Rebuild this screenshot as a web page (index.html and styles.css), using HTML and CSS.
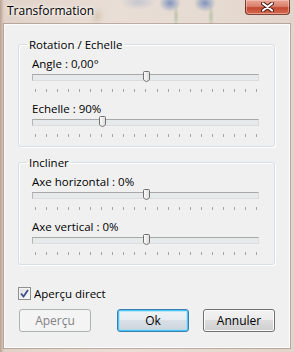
FILE: index.html
```html
<!DOCTYPE html>
<html lang="fr">
<head>
  <meta charset="UTF-8" />
  <title>Transformation</title>
  <link rel="stylesheet" href="styles.css">
</head>
<body>
  <div class="window">
    <!-- Barre de titre -->
    <div class="titlebar">
      <span class="title">Transformation</span>
      <button class="close" title="Fermer">
        <svg width="13" height="10" viewBox="0 0 13 10">
          <path d="M2 1.5 L11 8.5 M11 1.5 L2 8.5" stroke="#4a1a12" stroke-width="4" stroke-linecap="round"/>
          <path d="M2 1.5 L11 8.5 M11 1.5 L2 8.5" stroke="#fff" stroke-width="2.2" stroke-linecap="round"/>
        </svg>
      </button>
    </div>

    <div class="client">
      <fieldset class="group">
        <legend>Rotation / Echelle</legend>
        <div class="group-body">
          <div class="slider">
            <div class="slider-label">Angle : 0,00°</div>
            <div class="track"><div class="rail"><span class="thumb" style="left: 50%"></span></div></div>
            <div class="ticks"><i></i><i></i><i></i><i></i><i></i><i></i><i></i><i></i><i></i><i></i><i></i><i></i><i></i><i></i><i></i><i></i><i></i><i></i><i></i><i></i><i></i></div>
          </div>
          <div class="slider">
            <div class="slider-label">Echelle : 90%</div>
            <div class="track"><div class="rail"><span class="thumb" style="left: 30.3%"></span></div></div>
            <div class="ticks"><i></i><i></i><i></i><i></i><i></i><i></i><i></i><i></i><i></i><i></i><i></i><i></i><i></i><i></i><i></i><i></i><i></i><i></i><i></i><i></i><i></i></div>
          </div>
        </div>
      </fieldset>

      <fieldset class="group">
        <legend>Incliner</legend>
        <div class="group-body">
          <div class="slider">
            <div class="slider-label">Axe horizontal : 0%</div>
            <div class="track"><div class="rail"><span class="thumb" style="left: 50%"></span></div></div>
            <div class="ticks"><i></i><i></i><i></i><i></i><i></i><i></i><i></i><i></i><i></i><i></i><i></i><i></i><i></i><i></i><i></i><i></i><i></i><i></i><i></i><i></i><i></i></div>
          </div>
          <div class="slider">
            <div class="slider-label">Axe vertical : 0%</div>
            <div class="track"><div class="rail"><span class="thumb" style="left: 50%"></span></div></div>
            <div class="ticks"><i></i><i></i><i></i><i></i><i></i><i></i><i></i><i></i><i></i><i></i><i></i><i></i><i></i><i></i><i></i><i></i><i></i><i></i><i></i><i></i><i></i></div>
          </div>
        </div>
      </fieldset>

      <label class="check">
        <span class="box">
          <svg width="9" height="9" viewBox="0 0 9 9">
            <path d="M1 4.5 L3.5 7.5 L8 1" fill="none" stroke="#3b4f8c" stroke-width="1.8"/>
          </svg>
        </span>
        Aperçu direct
      </label>

      <div class="buttons">
        <button class="btn" disabled>Aperçu</button>
        <button class="btn btn-default">Ok</button>
        <button class="btn">Annuler</button>
      </div>
    </div>
  </div>
</body>
</html>
```

FILE: styles.css
```css
* {
  box-sizing: border-box;
}

body {
  margin: 0;
  font-family: "Segoe UI", "Open Sans", sans-serif;
  font-size: 11.5px;
  color: #000;
}

.window {
  width: 294px;
  height: 352px;
  display: flex;
  flex-direction: column;
  background:
    radial-gradient(ellipse 11px 9px at 170px 3px, rgba(60, 100, 175, 0.6), transparent),
    radial-gradient(ellipse 11px 9px at 205px 3px, rgba(60, 100, 175, 0.6), transparent),
    radial-gradient(ellipse 3px 12px at 176px 16px, rgba(110, 150, 90, 0.35), transparent),
    radial-gradient(ellipse 3px 12px at 211px 16px, rgba(110, 150, 90, 0.35), transparent),
    radial-gradient(ellipse 18px 8px at 138px 2px, rgba(90, 130, 190, 0.25), transparent),
    radial-gradient(ellipse 8px 10px at 97px 16px, rgba(180, 160, 120, 0.3), transparent),
    linear-gradient(90deg, #b9a093 0, #e0d2c8 4px, #e9ded6 40%, #e6dbd2 70%, #e1d4ca 100%);
}

.titlebar {
  height: 24px;
  display: flex;
  justify-content: space-between;
  align-items: flex-start;
}

.title {
  padding: 3px 0 0 7px;
  font-size: 12px;
  line-height: 15px;
  text-shadow: 0 0 6px #fff, 0 0 3px #fff;
}

.close {
  width: 45px;
  height: 15px;
  margin-right: 4px;
  padding: 0;
  display: flex;
  align-items: center;
  justify-content: center;
  border: 1px solid rgba(80, 30, 20, 0.7);
  border-top: none;
  border-radius: 0 0 4px 4px;
  background: linear-gradient(#e9a493 0%, #d9816e 45%, #c44a33 55%, #d2684c 100%);
  box-shadow: inset 0 0 0 1px rgba(255, 210, 200, 0.5);
}

.client {
  flex: 1;
  margin: 0 4px 4px 4px;
  padding: 12px 14px 0 13px;
  background: #f0f0f0;
  border: 1px solid rgba(255, 255, 255, 0.8);
  box-shadow: 0 0 0 1px rgba(110, 80, 70, 0.35);
}

.group {
  margin: 0 0 8px 0;
  padding: 0;
  border: 1px solid #d5dfe5;
  border-radius: 3px;
  box-shadow: inset 1px 1px 0 #fff, 1px 1px 0 #fff;
}

.group legend {
  margin-left: 8px;
  padding: 0 2px;
  line-height: 15px;
}

.group-body {
  padding: 4px 15px 9px 13px;
}

.slider + .slider {
  margin-top: 9px;
}

.slider-label {
  line-height: 15px;
}

.track {
  height: 7px;
  margin-top: 3px;
  padding: 0 2px 0 2px;
  border: 1px solid #dcdcdc;
  border-top-color: #a8a8a8;
  border-left-color: #b4b4b4;
  background: #e7eaea;
}

.rail {
  position: relative;
  height: 100%;
}

.thumb {
  position: absolute;
  top: -4px;
  width: 7px;
  height: 11px;
  margin-left: -3px;
  background: url("data:image/svg+xml,%3Csvg xmlns='http://www.w3.org/2000/svg' width='7' height='11'%3E%3Cdefs%3E%3ClinearGradient id='g' x1='0' y1='0' x2='1' y2='0'%3E%3Cstop offset='0' stop-color='%23fdfdfd'/%3E%3Cstop offset='1' stop-color='%23dcdcdc'/%3E%3C/linearGradient%3E%3C/defs%3E%3Cpath d='M0.5 1.5 Q0.5 0.5 1.5 0.5 H5.5 Q6.5 0.5 6.5 1.5 V8 Q6.5 9 5.5 9.7 L3.5 10.5 L1.5 9.7 Q0.5 9 0.5 8 Z' fill='url(%23g)' stroke='%23707070'/%3E%3C/svg%3E") no-repeat;
}

.ticks {
  display: flex;
  justify-content: space-between;
  margin-top: 8px;
  padding: 0 2px 0 3px;
}

.ticks i {
  width: 1px;
  height: 3px;
  background: #a4a4a4;
}

.check {
  display: flex;
  align-items: center;
  gap: 3px;
  margin-top: 21px;
  line-height: 15px;
}

.box {
  width: 13px;
  height: 13px;
  display: flex;
  align-items: center;
  justify-content: center;
  border: 1px solid #8e8f8f;
  background: linear-gradient(135deg, #dcdcdc, #fdfdfd);
  box-shadow: inset 0 0 0 1px #f4f4f4;
}

.buttons {
  display: flex;
  gap: 14px;
  margin: 8px 0 0 1px;
}

.btn {
  width: 72px;
  height: 23px;
  padding: 0;
  font-family: inherit;
  font-size: 12px;
  color: #000;
  border: 1px solid #707070;
  border-radius: 3px;
  background: linear-gradient(#f2f2f2 0%, #ebebeb 50%, #dddddd 50%, #cfcfcf 100%);
  box-shadow: inset 0 0 0 1px #fcfcfc;
}

.btn:disabled {
  color: #838383;
  border-color: #adb2b5;
  background: #f4f4f4;
  box-shadow: none;
}

.btn-default {
  margin-left: auto;
  border-color: #3c7fb1;
  background: linear-gradient(#eef3f7 0%, #e6ecf0 50%, #d8e0e6 50%, #ccd5dc 100%);
  box-shadow: inset 0 0 0 1px #49c4f5, inset 0 0 0 2px rgba(160, 220, 250, 0.6);
}
```
